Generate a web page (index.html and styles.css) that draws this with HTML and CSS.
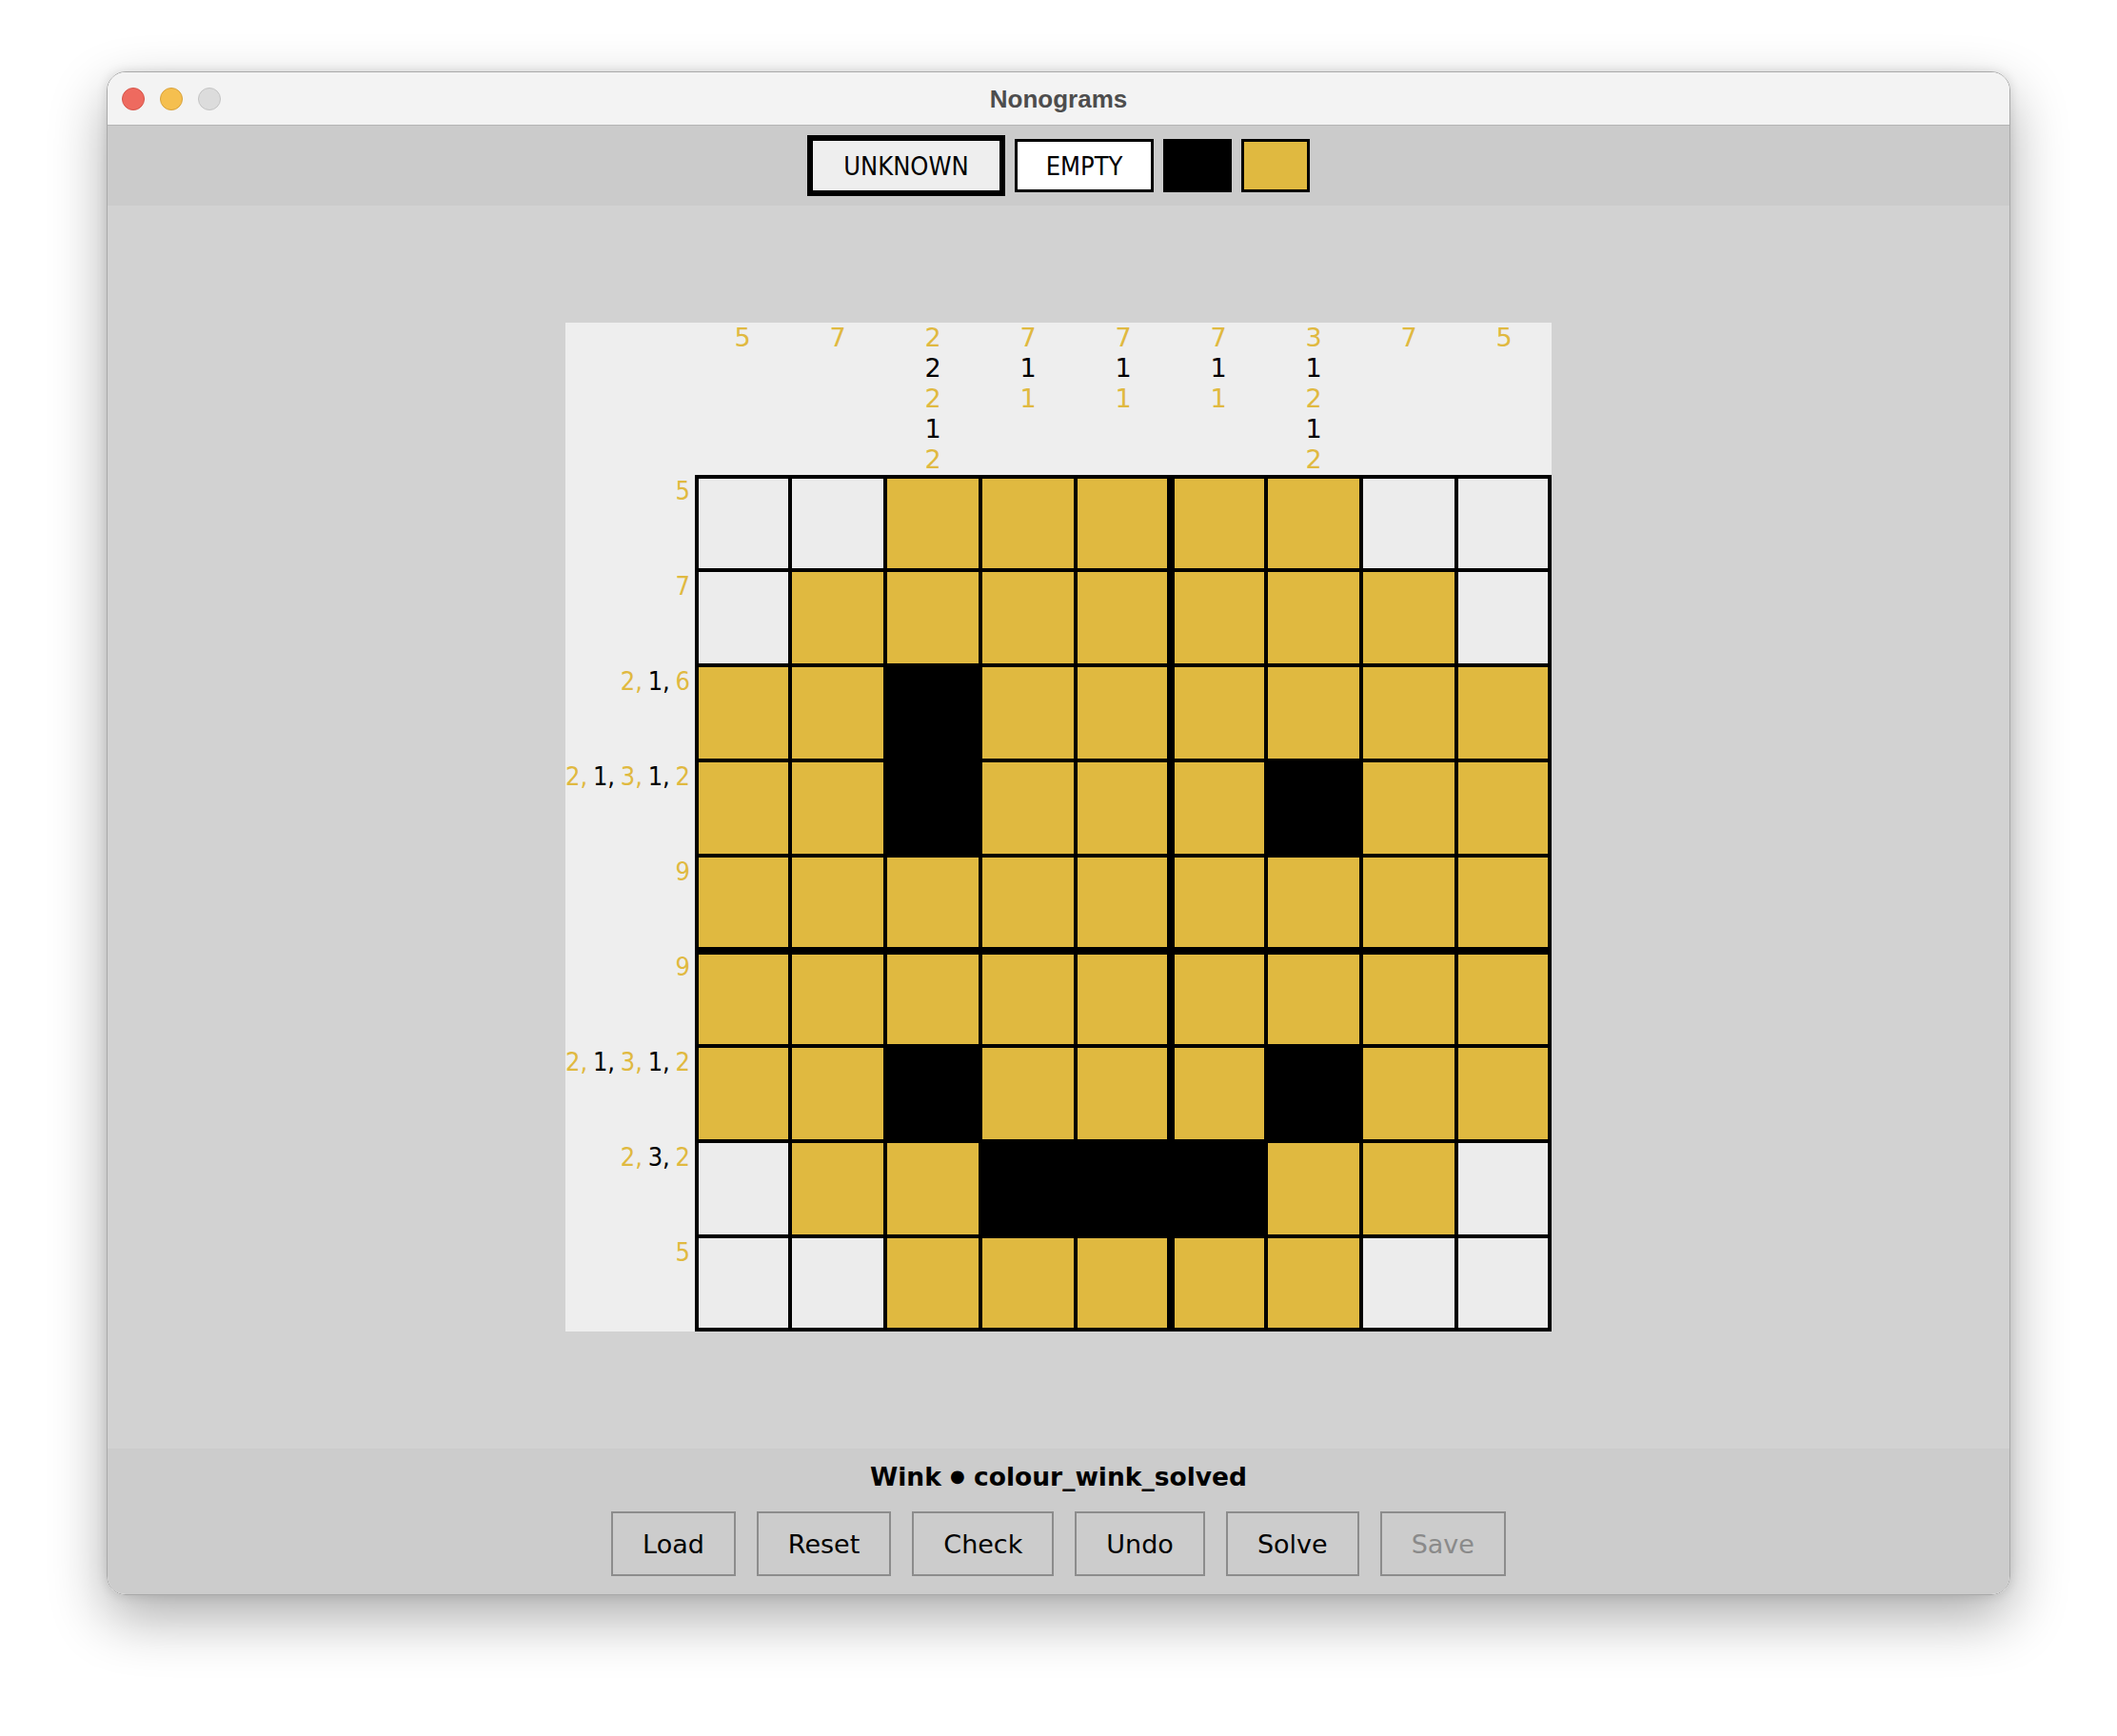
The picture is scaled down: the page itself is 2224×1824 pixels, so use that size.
FILE: index.html
```html
<!DOCTYPE html>
<html>
<head>
<meta charset="utf-8">
<title>Nonograms</title>
<link rel="stylesheet" href="styles.css">
</head>
<body>
<div class="window">
  <div class="titlebar">
    <div class="lights">
      <span class="light red"></span>
      <span class="light yellow"></span>
      <span class="light gray"></span>
    </div>
    <div class="title">Nonograms</div>
    <div></div>
  </div>
  <div class="toolbar">
    <button class="tool unknown">UNKNOWN</button>
    <button class="tool empty">EMPTY</button>
    <div class="swatch black"></div>
    <div class="swatch gold"></div>
  </div>
  <div class="main">
    <div class="board">
      <div class="corner"></div>
      <div class="colclues">
        <div class="colclue"><span class="g">5</span></div>
        <div class="colclue"><span class="g">7</span></div>
        <div class="colclue"><span class="g">2</span><span class="k">2</span><span class="g">2</span><span class="k">1</span><span class="g">2</span></div>
        <div class="colclue"><span class="g">7</span><span class="k">1</span><span class="g">1</span></div>
        <div class="colclue"><span class="g">7</span><span class="k">1</span><span class="g">1</span></div>
        <div class="colclue"><span class="g">7</span><span class="k">1</span><span class="g">1</span></div>
        <div class="colclue"><span class="g">3</span><span class="k">1</span><span class="g">2</span><span class="k">1</span><span class="g">2</span></div>
        <div class="colclue"><span class="g">7</span></div>
        <div class="colclue"><span class="g">5</span></div>
      </div>
      <div class="rowclues">
        <div class="rowclue"><span class="g">5</span></div>
        <div class="rowclue"><span class="g">7</span></div>
        <div class="rowclue"><span class="g">2,</span> <span class="k">1,</span> <span class="g">6</span></div>
        <div class="rowclue"><span class="g">2,</span> <span class="k">1,</span> <span class="g">3,</span> <span class="k">1,</span> <span class="g">2</span></div>
        <div class="rowclue"><span class="g">9</span></div>
        <div class="rowclue"><span class="g">9</span></div>
        <div class="rowclue"><span class="g">2,</span> <span class="k">1,</span> <span class="g">3,</span> <span class="k">1,</span> <span class="g">2</span></div>
        <div class="rowclue"><span class="g">2,</span> <span class="k">3,</span> <span class="g">2</span></div>
        <div class="rowclue"><span class="g">5</span></div>
      </div>
      <div class="grid">
        <!-- row 1 -->
        <div class="cell e"></div><div class="cell e"></div><div class="cell g"></div><div class="cell g"></div><div class="cell g c5"></div><div class="cell g c6"></div><div class="cell g"></div><div class="cell e"></div><div class="cell e"></div>
        <!-- row 2 -->
        <div class="cell e"></div><div class="cell g"></div><div class="cell g"></div><div class="cell g"></div><div class="cell g c5"></div><div class="cell g c6"></div><div class="cell g"></div><div class="cell g"></div><div class="cell e"></div>
        <!-- row 3 -->
        <div class="cell g"></div><div class="cell g"></div><div class="cell b"></div><div class="cell g"></div><div class="cell g c5"></div><div class="cell g c6"></div><div class="cell g"></div><div class="cell g"></div><div class="cell g"></div>
        <!-- row 4 -->
        <div class="cell g"></div><div class="cell g"></div><div class="cell b"></div><div class="cell g"></div><div class="cell g c5"></div><div class="cell g c6"></div><div class="cell b"></div><div class="cell g"></div><div class="cell g"></div>
        <!-- row 5 -->
        <div class="cell g r5"></div><div class="cell g r5"></div><div class="cell g r5"></div><div class="cell g r5"></div><div class="cell g r5 c5"></div><div class="cell g r5 c6"></div><div class="cell g r5"></div><div class="cell g r5"></div><div class="cell g r5"></div>
        <!-- row 6 -->
        <div class="cell g r6"></div><div class="cell g r6"></div><div class="cell g r6"></div><div class="cell g r6"></div><div class="cell g r6 c5"></div><div class="cell g r6 c6"></div><div class="cell g r6"></div><div class="cell g r6"></div><div class="cell g r6"></div>
        <!-- row 7 -->
        <div class="cell g"></div><div class="cell g"></div><div class="cell b"></div><div class="cell g"></div><div class="cell g c5"></div><div class="cell g c6"></div><div class="cell b"></div><div class="cell g"></div><div class="cell g"></div>
        <!-- row 8 -->
        <div class="cell e"></div><div class="cell g"></div><div class="cell g"></div><div class="cell b"></div><div class="cell b c5"></div><div class="cell b c6"></div><div class="cell g"></div><div class="cell g"></div><div class="cell e"></div>
        <!-- row 9 -->
        <div class="cell e"></div><div class="cell e"></div><div class="cell g"></div><div class="cell g"></div><div class="cell g c5"></div><div class="cell g c6"></div><div class="cell g"></div><div class="cell e"></div><div class="cell e"></div>
      </div>
    </div>
  </div>
  <div class="bottom">
    <div class="status">Wink <span class="dot">●</span> colour_wink_solved</div>
    <div class="buttons">
      <button class="btn">Load</button>
      <button class="btn">Reset</button>
      <button class="btn">Check</button>
      <button class="btn">Undo</button>
      <button class="btn">Solve</button>
      <button class="btn disabled">Save</button>
    </div>
  </div>
</div>
</body>
</html>
```
FILE: styles.css
```css
html, body {
  margin: 0;
  padding: 0;
}
body {
  width: 2224px;
  height: 1824px;
  overflow: hidden;
  background: #ffffff;
  font-family: "DejaVu Sans", sans-serif;
}
.window {
  box-sizing: border-box;
  width: 2000px;
  height: 1601px;
  margin: 75px 0 0 112px;
  border: 1px solid #a9a9a9;
  border-radius: 20px;
  overflow: hidden;
  display: flex;
  flex-direction: column;
  box-shadow: 0 24px 60px rgba(0, 0, 0, 0.32), 0 0 12px rgba(0, 0, 0, 0.12);
}
.titlebar {
  box-sizing: border-box;
  height: 56px;
  flex: none;
  background: #f3f3f3;
  border-bottom: 1px solid #b4b4b4;
  display: grid;
  grid-template-columns: 1fr auto 1fr;
  align-items: center;
}
.lights {
  display: flex;
  gap: 16px;
  padding-left: 15px;
  align-items: center;
}
.light {
  box-sizing: border-box;
  width: 24px;
  height: 24px;
  border-radius: 50%;
  display: block;
}
.light.red { background: #ee6a5f; border: 1px solid #d5564b; }
.light.yellow { background: #f5bf4f; border: 1px solid #d8a23c; }
.light.gray { background: #dcdcdc; border: 1px solid #c3c3c3; }
.title {
  font-family: "Liberation Sans", Arial, sans-serif;
  font-weight: bold;
  font-size: 26px;
  color: #4d4d4d;
  line-height: 30px;
}
.toolbar {
  height: 84px;
  flex: none;
  background: #cbcbcb;
  display: flex;
  justify-content: center;
  align-items: center;
  gap: 10px;
}
.tool {
  box-sizing: border-box;
  margin: 0;
  padding: 0;
  font-family: "DejaVu Sans Condensed", "DejaVu Sans", sans-serif;
  font-stretch: condensed;
  font-size: 27px;
  color: #000;
  display: flex;
  align-items: center;
  justify-content: center;
}
.tool.unknown {
  width: 208px;
  height: 64px;
  border: 6px solid #000;
  background: #eeeeee;
}
.tool.empty {
  width: 146px;
  height: 56px;
  border: 3px solid #000;
  background: #ffffff;
}
.swatch {
  box-sizing: border-box;
  width: 72px;
  height: 56px;
  border: 3px solid #000;
}
.swatch.black { background: #000; }
.swatch.gold { background: #e0b940; }
.main {
  flex: 1;
  background: #d2d2d2;
  display: flex;
  justify-content: center;
  align-items: center;
}
.board {
  display: grid;
  grid-template-columns: 136px 900px;
  grid-template-rows: 160px 900px;
  background: #eeeeee;
  font-size: 27px;
  line-height: 32px;
}
.colclues {
  display: grid;
  grid-template-columns: repeat(9, 100px);
}
.colclue {
  display: flex;
  flex-direction: column;
  align-items: center;
}
.rowclues {
  display: grid;
  grid-template-rows: repeat(9, 100px);
}
.rowclue {
  text-align: right;
  padding-right: 5px;
  padding-top: 1px;
  white-space: nowrap;
  font-family: "DejaVu Sans Condensed", "DejaVu Sans", sans-serif;
  font-stretch: condensed;
  word-spacing: -2px;
}
.g { color: #e0b940; }
.k { color: #000; }
.grid {
  box-sizing: border-box;
  width: 900px;
  height: 900px;
  background: #000;
  padding: 4px;
  display: grid;
  grid-template-columns: 94px repeat(7, 96px) 94px;
  grid-template-rows: 94px repeat(7, 96px) 94px;
  gap: 4px;
}
.cell.e { background: #ececec; }
.cell.g { background: #e0b940; }
.cell.b { background: #000; }
.cell.c5 { margin-right: 2px; }
.cell.c6 { margin-left: 2px; }
.cell.r5 { margin-bottom: 2px; }
.cell.r6 { margin-top: 2px; }
.bottom {
  box-sizing: border-box;
  height: 153px;
  flex: none;
  background: #cccccc;
  padding-top: 13px;
  display: flex;
  flex-direction: column;
  align-items: center;
}
.status {
  font-weight: bold;
  font-size: 26.5px;
  line-height: 32px;
  color: #000;
}
.dot {
  font-size: 18px;
  vertical-align: 4px;
}
.buttons {
  margin-top: 20px;
  display: flex;
  gap: 22px;
}
.btn {
  box-sizing: border-box;
  margin: 0;
  height: 68px;
  padding: 0 31px;
  border: 2px solid #8c8c8c;
  background: #cccccc;
  font-family: "DejaVu Sans", sans-serif;
  font-size: 27px;
  color: #000;
}
.btn.disabled {
  color: #8a8a8a;
}
```
